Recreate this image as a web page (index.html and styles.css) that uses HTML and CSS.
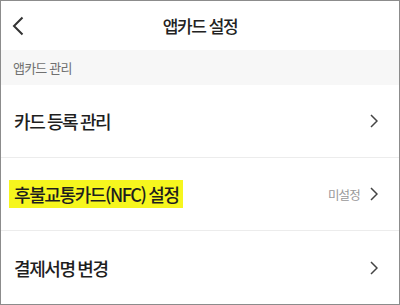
FILE: index.html
```html
<!DOCTYPE html>
<html lang="ko">
<head>
  <meta charset="UTF-8">
  <meta name="viewport" content="width=device-width, initial-scale=1.0">
  <title>앱카드 설정</title>
  <link rel="stylesheet" href="styles.css">
</head>
<body>
  <div class="frame">
    <div class="header">
      <a href="#" class="back">
        <svg width="12" height="20" viewBox="0 0 12 20"><path d="M10.5 1.5 L2 10 L10.5 18.5" fill="none" stroke="#333" stroke-width="2"/></svg>
      </a>
      <p class="title">앱카드 설정</p>
    </div>
    <div class="section">앱카드 관리</div>
    <div class="row">
      <span class="label">카드 등록 관리</span>
      <span class="right">
        <svg class="chev" width="8" height="14" viewBox="0 0 8 14"><path d="M1 1 L7 7 L1 13" fill="none" stroke="#444" stroke-width="1.5"/></svg>
      </span>
    </div>
    <div class="row">
      <span class="label"><span class="mark">후불교통카드(NFC) 설정</span></span>
      <span class="right">
        <span class="state">미설정</span>
        <svg class="chev" width="8" height="14" viewBox="0 0 8 14"><path d="M1 1 L7 7 L1 13" fill="none" stroke="#444" stroke-width="1.5"/></svg>
      </span>
    </div>
    <div class="row last">
      <span class="label">결제서명 변경</span>
      <span class="right">
        <svg class="chev" width="8" height="14" viewBox="0 0 8 14"><path d="M1 1 L7 7 L1 13" fill="none" stroke="#444" stroke-width="1.5"/></svg>
      </span>
    </div>
  </div>
</body>
</html>
```

FILE: styles.css
```css
body {
  margin: 0;
  background: white;
  font-family: "Noto Sans CJK KR", "Noto Sans", sans-serif;
}

.frame {
  width: 400px;
  height: 305px;
  box-sizing: border-box;
  border: 1px solid #8c8c8c;
  display: flex;
  flex-direction: column;
  overflow: hidden;
}

.header {
  position: relative;
  height: 49px;
  display: flex;
  align-items: center;
  justify-content: center;
}
.back {
  position: absolute;
  left: 11px;
  top: 15px;
  display: block;
  width: 12px;
  height: 20px;
}
.title {
  margin: 0;
  font-size: 17px;
  font-weight: 500;
  color: #222;
  letter-spacing: -1.4px;
}

.section {
  height: 35px;
  background: #f7f7f7;
  display: flex;
  align-items: center;
  padding-left: 12px;
  font-size: 13px;
  color: #707070;
  letter-spacing: -0.8px;
}

.row {
  height: 72px;
  flex-shrink: 0;
  display: flex;
  align-items: center;
  justify-content: space-between;
  padding: 0 21px 0 13px;
  border-bottom: 1px solid #ececec;
}
.row.last {
  border-bottom: none;
  flex: 1;
}
.label {
  font-size: 18px;
  font-weight: 500;
  color: #1e1e1e;
  letter-spacing: -1.4px;
  word-spacing: -1px;
}
.mark {
  background: #f6f61e;
  padding: 1px 4px 1px 5px;
  margin-left: -5px;
}
.right {
  display: flex;
  align-items: center;
  gap: 10px;
}
.state {
  font-size: 12.5px;
  color: #999;
  letter-spacing: -0.8px;
}
.chev {
  display: block;
}
```
